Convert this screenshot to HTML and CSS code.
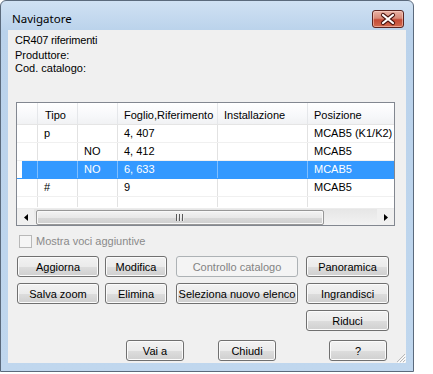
FILE: index.html
```html
<!DOCTYPE html>
<html>
<head>
<meta charset="utf-8">
<link rel="stylesheet" href="styles.css">
</head>
<body>
<div class="window">
  <div class="titlebar">
    <span class="title">Navigatore</span>
    <div class="close">
      <svg width="30" height="16" viewBox="0 0 30 16">
        <path d="M10 4 L20 12 M20 4 L10 12" stroke="#4a1410" stroke-width="4.2" stroke-linecap="round"/>
        <path d="M10 4 L20 12 M20 4 L10 12" stroke="#ffffff" stroke-width="2.2" stroke-linecap="round"/>
      </svg>
    </div>
  </div>
  <div class="client">
    <div class="info">
      <div class="l1">CR407 riferimenti</div>
      <div>Produttore:</div>
      <div>Cod. catalogo:</div>
    </div>

    <div class="grid">
      <div class="gview">
        <div class="row head">
          <div class="cell"></div>
          <div class="cell">Tipo</div>
          <div class="cell"></div>
          <div class="cell">Foglio,Riferimento</div>
          <div class="cell">Installazione</div>
          <div class="cell">Posizione</div>
        </div>
        <div class="row">
          <div class="cell"></div>
          <div class="cell">p</div>
          <div class="cell"></div>
          <div class="cell">4, 407</div>
          <div class="cell"></div>
          <div class="cell">MCAB5 (K1/K2)</div>
        </div>
        <div class="row">
          <div class="cell"></div>
          <div class="cell"></div>
          <div class="cell">NO</div>
          <div class="cell">4, 412</div>
          <div class="cell"></div>
          <div class="cell">MCAB5</div>
        </div>
        <div class="row sel">
          <div class="cell rh"></div>
          <div class="cell"></div>
          <div class="cell">NO</div>
          <div class="cell">6, 633</div>
          <div class="cell"></div>
          <div class="cell">MCAB5</div>
        </div>
        <div class="row">
          <div class="cell"></div>
          <div class="cell">#</div>
          <div class="cell"></div>
          <div class="cell">9</div>
          <div class="cell"></div>
          <div class="cell">MCAB5</div>
        </div>
        <div class="row">
          <div class="cell"></div>
          <div class="cell"></div>
          <div class="cell"></div>
          <div class="cell"></div>
          <div class="cell"></div>
          <div class="cell"></div>
        </div>
      </div>
      <div class="hscroll">
        <div class="arrow">
          <svg width="4" height="7" viewBox="0 0 4 7"><path d="M4 0 L0 3.5 L4 7 Z" fill="#000"/></svg>
        </div>
        <div class="track">
          <div class="thumb">
            <span class="gripbar"></span><span class="gripbar"></span><span class="gripbar"></span>
          </div>
        </div>
        <div class="arrow">
          <svg width="4" height="7" viewBox="0 0 4 7"><path d="M0 0 L4 3.5 L0 7 Z" fill="#000"/></svg>
        </div>
      </div>
    </div>

    <div class="chk"><span class="box"></span><span>Mostra voci aggiuntive</span></div>

    <div class="buttons">
      <button class="btn c1">Aggiorna</button>
      <button class="btn c2">Modifica</button>
      <button class="btn c3 disabled">Controllo catalogo</button>
      <button class="btn c4">Panoramica</button>
      <button class="btn c1">Salva zoom</button>
      <button class="btn c2">Elimina</button>
      <button class="btn c3">Seleziona nuovo elenco</button>
      <button class="btn c4">Ingrandisci</button>
      <button class="btn c4">Riduci</button>
    </div>

    <div class="bottom">
      <button class="btn b1">Vai a</button>
      <button class="btn b2">Chiudi</button>
      <button class="btn b3">?</button>
    </div>

    <svg class="sizegrip" width="11" height="11" viewBox="0 0 11 11">
      <path d="M10 2 L2 10 M10 5 L5 10 M10 8 L8 10" stroke="#b8b8b8" stroke-width="1"/>
      <path d="M11 3 L3 11 M11 6 L6 11 M11 9 L9 11" stroke="#ffffff" stroke-width="1"/>
    </svg>
  </div>
</div>
</body>
</html>
```
FILE: styles.css
```css
html, body {
  margin: 0;
  padding: 0;
  background: #ffffff;
}

.window {
  width: 414px;
  height: 372px;
  box-sizing: border-box;
  border: 1px solid #5b6a7c;
  border-radius: 6px 6px 0 0;
  background: linear-gradient(to bottom, #d0e1f3 0px, #bad2eb 30px, #c0d7ee 100%);
  padding: 0 7px 8px 7px;
  display: flex;
  flex-direction: column;
}

.titlebar {
  height: 29px;
  display: flex;
  justify-content: space-between;
  align-items: flex-start;
  flex-shrink: 0;
}

.title {
  font-family: "Noto Sans", "Open Sans", sans-serif;
  font-size: 11.5px;
  line-height: 16px;
  color: #000;
  margin: 10px 0 0 4px;
}

.close {
  width: 30px;
  height: 16px;
  margin: 9px 2px 0 0;
  border: 1px solid #5a2420;
  border-radius: 3px;
  background: linear-gradient(to bottom, #e9b3a6 0%, #d88a78 45%, #c44a36 55%, #d26a4e 100%);
  box-shadow: inset 0 0 0 1px rgba(255, 220, 210, 0.5);
  display: flex;
}

.close svg {
  display: block;
}

.client {
  position: relative;
  width: 398px;
  height: 333px;
  background: #f0f0f0;
  box-sizing: border-box;
  padding-top: 4px;
  font-family: "Liberation Sans", Arial, sans-serif;
  font-size: 11px;
  font-weight: 400;
  color: #000;
}

.info {
  padding-left: 7px;
  line-height: 13px;
}

.info .l1 {
  height: 15px;
  letter-spacing: -0.2px;
}

.grid {
  margin: 27px 0 0 8px;
  width: 379px;
  height: 124px;
  box-sizing: border-box;
  border: 1px solid #828790;
  background: #ffffff;
  display: flex;
  flex-direction: column;
}

.gview {
  height: 104px;
  overflow: hidden;
}

.row {
  display: grid;
  grid-template-columns: 21px 40px 40px 100px 90px 86px;
  height: 18px;
  box-sizing: border-box;
  border-bottom: 1px solid #f0f0f0;
}

.cell {
  box-sizing: border-box;
  border-right: 1px solid #e2e2e2;
  padding-left: 6px;
  line-height: 17px;
  white-space: nowrap;
  overflow: hidden;
}

.cell:last-child {
  border-right: none;
}

.row.head {
  height: 22px;
  background: linear-gradient(to bottom, #ffffff 0%, #f7f8fa 60%, #f1f2f4 100%);
  border-bottom: 1px solid #e5e5e5;
}

.row.head .cell {
  line-height: 20px;
  padding-top: 2px;
  padding-left: 6px;
  border-right-color: #e5e7ea;
}

.row.head .cell:nth-child(2) {
  padding-left: 7px;
}

.row.sel {
  background: #3399ff;
  color: #ffffff;
  border-bottom-color: #3399ff;
}

.row.sel .cell {
  border-right-color: #7fbfff;
}

.row.sel .cell.rh {
  background: linear-gradient(to right, #ffffff 5px, #3399ff 5px);
}

.hscroll {
  height: 17px;
  margin-top: auto;
  display: flex;
  background: #f0f0f0;
  border-top: 1px solid #ececec;
  box-sizing: border-box;
}

.arrow {
  width: 17px;
  display: flex;
  align-items: center;
  justify-content: center;
  flex-shrink: 0;
}

.arrow svg {
  display: block;
}

.track {
  flex: 1;
  display: flex;
  align-items: center;
  padding-left: 2px;
  background: linear-gradient(to bottom, #e6e6e6, #f2f2f2);
}

.thumb {
  width: 288px;
  height: 15px;
  box-sizing: border-box;
  border: 1px solid #979797;
  border-radius: 2px;
  background: linear-gradient(to bottom, #f3f3f3 0%, #e8e8e8 50%, #d9d9d9 51%, #cfcfcf 100%);
  box-shadow: inset 0 0 0 1px #f8f8f8;
  display: flex;
  justify-content: center;
  align-items: center;
  gap: 1px;
}

.gripbar {
  width: 2px;
  height: 7px;
  background: linear-gradient(to right, #5a5a5a 50%, #eeeeee 50%);
}

.chk {
  margin: 9px 0 0 11px;
  height: 13px;
  display: flex;
  align-items: center;
  gap: 4px;
  color: #8a8a8a;
  line-height: 13px;
}

.chk .box {
  width: 13px;
  height: 13px;
  box-sizing: border-box;
  border: 1px solid #b8b8b8;
  background: #f5f5f5;
}

.buttons {
  margin: 8px 0 0 9px;
  display: grid;
  grid-template-columns: 82px 6px 62px 9px 122px 8px 83px;
  grid-auto-rows: 21px;
  row-gap: 6px;
}

.btn {
  font-family: "Liberation Sans", Arial, sans-serif;
  font-size: 11px;
  font-weight: 400;
  color: #000;
  margin: 0;
  padding: 0;
  height: 21px;
  box-sizing: border-box;
  border: 1px solid #707070;
  border-radius: 3px;
  background: linear-gradient(to bottom, #f2f2f2 0%, #ebebeb 50%, #dddddd 51%, #cfcfcf 100%);
  box-shadow: inset 0 0 0 1px #fbfbfb;
  white-space: nowrap;
  overflow: hidden;
}

.btn.disabled {
  border-color: #adb2b5;
  background: #f4f4f4;
  box-shadow: none;
  color: #838383;
}

.c1 { grid-column: 1; }
.c2 { grid-column: 3; }
.c3 { grid-column: 5; }
.c4 { grid-column: 7; }

.bottom {
  margin: 9px 0 0 118px;
  display: flex;
}

.bottom .btn {
  width: 58px;
}

.bottom .b2 {
  margin-left: 34px;
}

.bottom .b3 {
  margin-left: 53px;
}

.sizegrip {
  position: absolute;
  right: 0;
  bottom: 0;
  display: block;
}
```
